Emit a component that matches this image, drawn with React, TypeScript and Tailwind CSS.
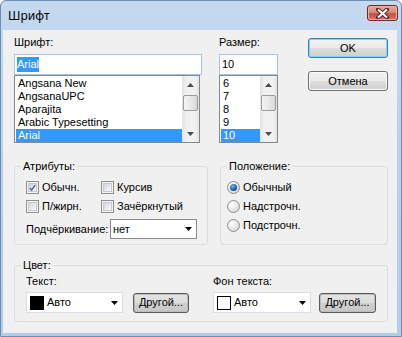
import React from 'react';

const fontItems = ['Angsana New', 'AngsanaUPC', 'Aparajita', 'Arabic Typesetting', 'Arial'];
const sizeItems = ['6', '7', '8', '9', '10'];

const Arrow = ({ down = false }: { down?: boolean }) => (
  <svg width="7" height="4" viewBox="0 0 7 4">
    <path d={down ? 'M0 0 L7 0 L3.5 4Z' : 'M0 4 L3.5 0 L7 4Z'} fill="#4d4d4d" />
  </svg>
);

const ScrollBar = () => (
  <div className="w-[17px] h-full flex flex-col shrink-0 bg-[linear-gradient(90deg,#e2e2e2,#f1f1f1_25%,#f1f1f1_75%,#e5e5e5)]">
    <div className="h-[17px] flex items-center justify-center">
      <Arrow />
    </div>
    <div className="mt-[2px] mx-[1px] h-[16px] rounded-[2px] border border-[#9a9a9a] bg-[linear-gradient(90deg,#f4f4f4,#e9e9e9_50%,#d8d8d8)]" />
    <div className="flex-1" />
    <div className="h-[17px] flex items-center justify-center">
      <Arrow down />
    </div>
  </div>
);

const ListBox = ({ items, width }: { items: string[]; width: string }) => (
  <div className={`${width} h-[68px] border border-[#828790] bg-white flex overflow-hidden`}>
    <div className="flex-1 pt-px pl-px overflow-hidden">
      {items.map((item, i) => (
        <div
          key={item}
          className={`h-[13px] leading-[13px] pl-[2px] whitespace-nowrap ${
            i === items.length - 1 ? 'bg-[#3399ff] text-white' : ''
          }`}
        >
          {item}
        </div>
      ))}
    </div>
    <ScrollBar />
  </div>
);

// push buttons: plain, default (blue glow) and the darker "Другой..." kind
const Button = ({ children, kind = 'plain', className = '' }: { children: React.ReactNode; kind?: 'plain' | 'primary' | 'dark'; className?: string }) => {
  const look =
    kind === 'primary'
      ? 'border-[#3c7fb1] shadow-[inset_0_0_0_1px_#7ed4f6] bg-[linear-gradient(180deg,#f2f2f2_0%,#ebebeb_48%,#dddddd_52%,#cfcfcf_100%)]'
      : kind === 'dark'
      ? 'border-[#5a5a5a] shadow-[inset_0_0_0_1px_#bdbdbd] bg-[linear-gradient(180deg,#e4e4e4_0%,#dcdcdc_48%,#d0d0d0_52%,#c6c6c6_100%)]'
      : 'border-[#707070] shadow-[inset_0_0_0_1px_#fbfbfb] bg-[linear-gradient(180deg,#f2f2f2_0%,#ebebeb_48%,#dddddd_52%,#cfcfcf_100%)]';
  return (
    <div className={`flex items-center justify-center rounded-[3px] border ${look} ${className}`}>
      {children}
    </div>
  );
};

const CheckBox = ({ label, checked = false }: { label: string; checked?: boolean }) => (
  <div className="h-[13px] flex items-center gap-[3px]">
    <div className="w-[13px] h-[13px] border border-[#8f8f8f] bg-[#f4f4f4] p-px shrink-0">
      <div className="w-full h-full border border-[#c6c9cf] bg-[linear-gradient(135deg,#cfd3d9,#eef0f2_70%,#f8f8f8)] flex items-center justify-center">
        {checked && (
          <svg width="8" height="8" viewBox="0 0 8 8">
            <path d="M1 4 L3 6.5 L7 0.8" stroke="#4a5f96" strokeWidth="1.6" fill="none" />
          </svg>
        )}
      </div>
    </div>
    <span className="leading-[13px] whitespace-nowrap">{label}</span>
  </div>
);

const Radio = ({ label, checked = false }: { label: string; checked?: boolean }) => (
  <div className="h-[13px] flex items-center gap-[3px]">
    <div className="w-[13px] h-[13px] rounded-full border border-[#8f8f8f] bg-[radial-gradient(circle_at_35%_35%,#ffffff,#dcdde0_70%,#c9cbd0)] flex items-center justify-center shrink-0">
      {checked && (
        <div className="w-[7px] h-[7px] rounded-full bg-[radial-gradient(circle_at_40%_35%,#6fb8f0,#1f5fa8_55%,#0f3366)]" />
      )}
    </div>
    <span className="leading-[13px] whitespace-nowrap">{label}</span>
  </div>
);

const ColorCombo = ({ swatch, width }: { swatch: string; width: string }) => (
  <div className={`${width} h-[21px] border border-[#d9dfe6] bg-white flex items-center pl-[3px] pr-[4px]`}>
    <div className={`w-[14px] h-[14px] border border-black ${swatch}`} />
    <span className="ml-[3px] leading-[13px]">Авто</span>
    <div className="flex-1" />
    <svg width="7" height="4" viewBox="0 0 7 4">
      <path d="M0 0 L7 0 L3.5 4Z" fill="#000" />
    </svg>
  </div>
);

export default function App() {
  return (
    <div className="w-[402px] h-[337px] flex flex-col rounded-t-[6px] border border-[#6e8db3] bg-[linear-gradient(180deg,#c5d9f0_0%,#b9d1eb_40%,#b4cce8_100%)] overflow-hidden font-['Liberation_Sans',Arial,sans-serif] text-[11px] text-black">
      {/* Title bar */}
      <div className="h-[29px] flex items-start shrink-0">
        <div className="pl-[7px] h-[29px] flex items-center text-[12px] font-['Noto_Sans',sans-serif] text-black">
          Шрифт
        </div>
        <div className="flex-1" />
        <div className="mt-[4px] mr-[3px] w-[31px] h-[16px] rounded-[3px] border border-[#6a2a24] bg-[linear-gradient(180deg,#e8a897_0%,#d98c7b_45%,#c4503f_55%,#d4786a_100%)] shadow-[inset_0_0_0_1px_#eab3a6] flex items-center justify-center">
          <svg width="13" height="11" viewBox="0 0 13 11">
            <path d="M2 1.5 L11 9.5 M11 1.5 L2 9.5" stroke="#5a2a25" strokeWidth="4" strokeLinecap="square" />
            <path d="M2 1.5 L11 9.5 M11 1.5 L2 9.5" stroke="#ffffff" strokeWidth="2" />
          </svg>
        </div>
      </div>

      {/* Client area */}
      <div className="flex-1 ml-[2px] mr-[4px] mb-[3px] bg-[#f0f0f0] pl-[11px] pt-[6px]">
        {/* Font, size, buttons */}
        <div className="flex items-start">
          <div className="w-[188px]">
            <div className="h-[13px] leading-[13px]">Шрифт:</div>
            <div className="mt-[5px] h-[21px] border border-[#a9c4e2] bg-white flex items-center pl-[2px]">
              <span className="bg-[#3399ff] text-white leading-[15px]">Arial</span>
            </div>
            <ListBox items={fontItems} width="w-[186px]" />
          </div>

          <div className="ml-[17px] w-[59px]">
            <div className="h-[13px] leading-[13px]">Размер:</div>
            <div className="mt-[5px] h-[21px] border border-[#a9c4e2] bg-white flex items-center pl-[2px]">
              <span className="leading-[15px]">10</span>
            </div>
            <ListBox items={sizeItems} width="w-[59px]" />
          </div>

          <div className="ml-[30px] w-[80px] pt-[2px]">
            <Button kind="primary" className="h-[20px]">OK</Button>
            <Button className="h-[20px] mt-[13px]">Отмена</Button>
          </div>
        </div>

        {/* Attributes + position */}
        <div className="flex mt-[17px]">
          <fieldset className="w-[194px] h-[85px] border border-[#d5dfe5] rounded-[3px]">
            <legend className="ml-[6px] px-[2px] h-[13px] leading-[13px]">Атрибуты:</legend>
            <div className="pl-[11px] pt-[8px]">
              <div className="grid grid-cols-[75px_auto] gap-y-[6px]">
                <CheckBox label="Обычн." checked />
                <CheckBox label="Курсив" />
                <CheckBox label="П/жирн." />
                <CheckBox label="Зачёркнутый" />
              </div>
              <div className="mt-[6px] flex items-center">
                <span className="w-[84px] whitespace-nowrap">Подчёркивание:</span>
                <div className="w-[87px] h-[20px] border border-[#8a8a8a] bg-white flex items-center pl-[2px] pr-[4px]">
                  <span>нет</span>
                  <div className="flex-1" />
                  <svg width="7" height="4" viewBox="0 0 7 4">
                    <path d="M0 0 L7 0 L3.5 4Z" fill="#000" />
                  </svg>
                </div>
              </div>
            </div>
          </fieldset>

          <fieldset className="ml-[12px] w-[168px] h-[85px] border border-[#d5dfe5] rounded-[3px]">
            <legend className="ml-[6px] px-[2px] h-[13px] leading-[13px]">Положение:</legend>
            <div className="pl-[6px] pt-[8px] flex flex-col gap-[6px]">
              <Radio label="Обычный" checked />
              <Radio label="Надстрочн." />
              <Radio label="Подстрочн." />
            </div>
          </fieldset>
        </div>

        {/* Colour */}
        <fieldset className="mt-[14px] w-[374px] h-[63px] border border-[#d5dfe5] rounded-[3px]">
          <legend className="ml-[6px] px-[2px] h-[13px] leading-[13px]">Цвет:</legend>
          <div className="flex pl-[11px] pt-[3px]">
            <div>
              <div className="h-[13px] leading-[13px]">Текст:</div>
              <div className="mt-[4px] flex items-center">
                <ColorCombo swatch="bg-black" width="w-[97px]" />
                <Button kind="dark" className="ml-[10px] w-[56px] h-[20px]">Другой...</Button>
              </div>
            </div>
            <div className="ml-[24px]">
              <div className="h-[13px] leading-[13px]">Фон текста:</div>
              <div className="mt-[4px] flex items-center">
                <ColorCombo swatch="bg-white" width="w-[98px]" />
                <Button kind="dark" className="ml-[8px] w-[57px] h-[20px]">Другой...</Button>
              </div>
            </div>
          </div>
        </fieldset>
      </div>
    </div>
  );
}
